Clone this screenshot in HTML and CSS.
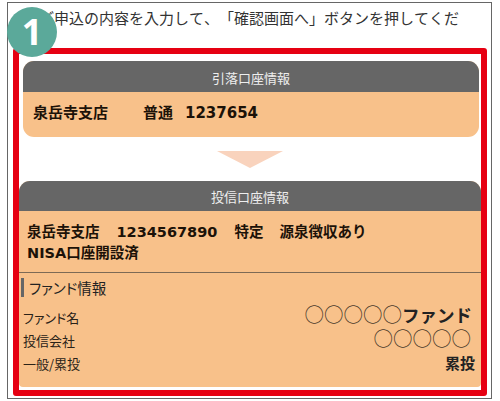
FILE: index.html
```html
<!DOCTYPE html>
<html lang="ja">
<head>
<meta charset="utf-8">
<title>申込内容</title>
<link rel="stylesheet" href="styles.css">
</head>
<body>
<div class="frame">
  <p class="lead">ご申込の内容を入力して、「確認画面へ」ボタンを押してくだ</p>
  <div class="badge">1</div>
  <div class="redbox">
    <section class="card first">
      <h2 class="card-head">引落口座情報</h2>
      <div class="card-body account-one"><span class="branch">泉岳寺支店</span><span class="kind">普通</span><span>1237654</span></div>
    </section>
    <div class="arrow"></div>
    <section class="card second">
      <h2 class="card-head">投信口座情報</h2>
      <div class="card-body account-two">
        <div>泉岳寺支店<span class="gap">1234567890</span><span class="gap">特定</span><span class="gap-narrow">源泉徴収あり</span></div>
        <div>NISA口座開設済</div>
      </div>
      <div class="fund">
        <div class="fund-title">ファンド情報</div>
        <div class="fund-row"><span class="label">ファンド名</span><span class="value-name"><span class="circles">○○○○○</span>ファンド</span></div>
        <div class="fund-row"><span class="label">投信会社</span><span class="circles company">○○○○○</span></div>
        <div class="fund-row"><span class="label">一般/累投</span><span class="value-type">累投</span></div>
      </div>
    </section>
  </div>
</div>
</body>
</html>
```
FILE: styles.css
```css
* { box-sizing: border-box; }
html, body { margin: 0; padding: 0; background: #fff; }
body {
  width: 500px;
  height: 401px;
  overflow: hidden;
  font-family: "Noto Sans CJK JP", "Liberation Sans", sans-serif;
  color: #222;
}
.frame {
  position: relative;
  width: 485px;
  height: 397px;
  margin: 2px 0 0 7px;
  padding: 0 5px 0 5px;
  border: 1px solid #666;
}
.lead {
  margin: 0;
  height: 45px;
  padding: 4px 0 0 26px;
  font-size: 15px;
  line-height: 22px;
  white-space: nowrap;
  overflow: hidden;
  color: #333;
  font-kerning: none;
  text-spacing-trim: space-all;
}
.badge {
  position: absolute;
  left: -1px;
  top: 4px;
  width: 50px;
  height: 50px;
  border-radius: 50%;
  background: #5ba99a;
  color: #fff;
  font: 700 36px/50px "Noto Sans", sans-serif;
  text-align: center;
}
.redbox {
  width: 474px;
  height: 348px;
  border: 6px solid #e60012;
  border-radius: 3px;
  padding-top: 7px;
}
.card { background: #f8c18a; }
.first {
  margin: 0 2px 0 4px;
  height: 76px;
  border-radius: 11px;
  overflow: hidden;
}
.second {
  height: 206px;
  border-radius: 11px 11px 4px 4px;
  overflow: hidden;
}
.card-head {
  margin: 0;
  height: 31px;
  background: #666;
  color: #eee;
  font-size: 13px;
  font-weight: 400;
  line-height: 34px;
  text-align: center;
}
.second .card-head { height: 30px; line-height: 32px; }
.card-body {
  font-family: "DejaVu Sans", "Noto Sans CJK JP", sans-serif;
  font-weight: 700;
  color: #1c1208;
}
.account-one {
  padding: 10px 0 0 10px;
  font-size: 15px;
  line-height: 22px;
  display: flex;
}
.branch { width: 110px; }
.kind { width: 42px; }
.account-two {
  height: 62px;
  padding: 11px 0 0 8px;
  font-size: 14.5px;
  line-height: 21px;
  border-bottom: 1px solid #7d6a55;
}
.gap { margin-left: 17px; }
.gap-narrow { margin-left: 16px; }
.fund { padding: 5px 6px 0 2px; font-size: 13px; }
.fund-title {
  border-left: 3px solid #666;
  padding-left: 5px;
  height: 19px;
  margin-bottom: 9px;
  font-size: 14.5px;
  line-height: 19px;
  font-feature-settings: "palt";
}
.fund-row {
  display: flex;
  justify-content: space-between;
  align-items: center;
  height: 23px;
  line-height: 23px;
}
.label {
  padding-left: 2px;
  color: #2a2218;
  font-feature-settings: "palt";
}
.circles { font-size: 19.5px; font-weight: 400; color: #4a3a2a; }
.value-name { font-size: 17.5px; font-weight: 700; line-height: 18px; margin: 0 3px 6px 0; }
.value-name .circles { line-height: 18px; }
.company { line-height: 18px; margin: 0 4px 6px 0; }
.value-type { font-size: 15px; font-weight: 700; line-height: 18px; margin-bottom: 2px; }
.arrow {
  width: 0;
  height: 0;
  margin: 14px 0 13px 198px;
  border-style: solid;
  border-width: 17px 33.5px 0;
  border-color: #f9d3bd transparent transparent;
}
```
